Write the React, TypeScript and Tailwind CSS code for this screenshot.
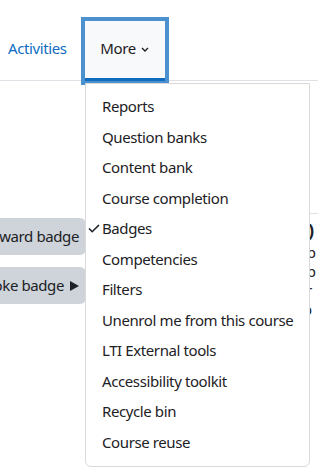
import { ReactNode } from 'react';

const menuItems = [
  'Reports',
  'Question banks',
  'Content bank',
  'Course completion',
  'Badges',
  'Competencies',
  'Filters',
  'Unenrol me from this course',
  'LTI External tools',
  'Accessibility toolkit',
  'Recycle bin',
  'Course reuse',
];

const GreyButton = ({ children, className = '' }: { children: ReactNode; className?: string }) => (
  <div
    className={`flex items-center gap-[6px] whitespace-nowrap h-[37px] pl-3 pr-[7px] rounded-[6px] bg-[#ced4da] text-[#1d2125] ${className}`}
  >
    {children}
  </div>
);

const App = () => {
  return (
    <div
      className="relative w-[318px] h-[472px] overflow-hidden bg-white text-[15px] tracking-[-0.4px] text-[#1d2125]"
      style={{ fontFamily: '"Noto Sans", "Open Sans", sans-serif' }}
    >
      {/* Secondary nav */}
      <div className="flex items-end h-[81px] border-b border-[#dee2e6]">
        <a className="flex items-center h-[60px] -mb-px px-2 pb-[5px] text-[#0f6cbf]">Activities</a>
        <div className="ml-[10px] -mb-px ring-4 ring-[#4b91cf] bg-[#f8f9fa] h-[60px] w-[80px] flex items-center justify-center gap-[5px] pb-[2px] border-b-[3px] border-[#0f6cbf]">
          <span>More</span>
          <svg width="8" height="5" viewBox="0 0 8 5" className="mt-[2px]">
            <path d="M1 1l3 3 3-3" fill="none" stroke="#1d2125" strokeWidth="1.4" />
          </svg>
        </div>
      </div>

      {/* Page content behind the menu */}
      <div className="flex items-start pt-[132px]">
        <div className="w-[86px] shrink-0 flex flex-col items-end gap-3 mt-[5px]">
          <GreyButton>Award badge</GreyButton>
          <GreyButton>
            Revoke badge
            <svg width="9" height="10" viewBox="0 0 9 10">
              <polygon points="0,0 9,5 0,10" fill="#1d2125" />
            </svg>
          </GreyButton>
        </div>
        <div className="ml-[206px] w-[80px] shrink-0 border-t border-l border-[#dee2e6] pl-[5px] pt-[5px] whitespace-nowrap">
          <div className="text-[18px] font-bold leading-[22px]">0)</div>
          <div className="leading-[19px] mt-[2px]">np</div>
          <div className="leading-[19px]">up</div>
          <div className="leading-[19px]">er</div>
          <div className="leading-[19px]">to</div>
        </div>
      </div>

      {/* More dropdown */}
      <div className="absolute left-[85px] top-[83px] w-[225px] bg-white border border-[#d9d9d9] rounded-b-[6px] pt-[7px] pb-[9px]">
        {menuItems.map((item) => (
          <div key={item} className="relative pl-4 py-1 leading-[22.5px] whitespace-nowrap">
            {item === 'Badges' && (
              <svg width="12" height="9" viewBox="0 0 12 9" className="absolute left-[2px] top-[11px]">
                <path d="M1 4.5l3.2 3.2L11 1" fill="none" stroke="#1d2125" strokeWidth="1.6" />
              </svg>
            )}
            {item}
          </div>
        ))}
      </div>
    </div>
  );
};

export default App;
